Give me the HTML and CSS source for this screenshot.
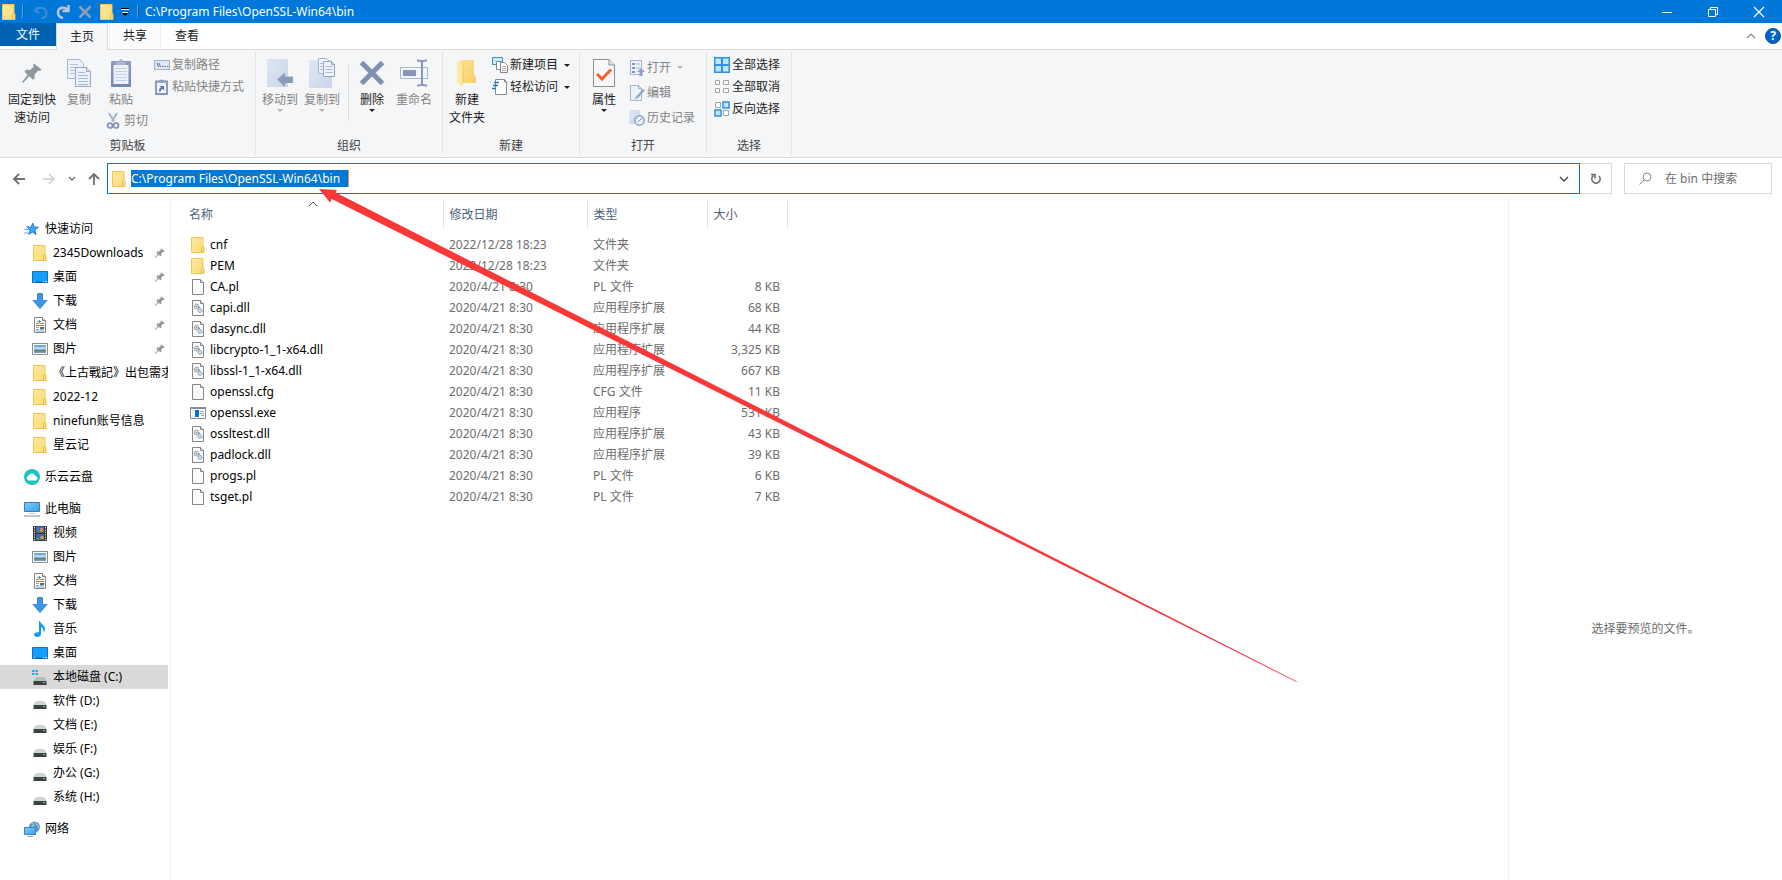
FILE: index.html
```html
<!DOCTYPE html>
<html lang="zh-CN">
<head>
<meta charset="utf-8">
<title>C:\Program Files\OpenSSL-Win64\bin</title>
<link rel="stylesheet" href="styles.css">
</head>
<body>
<svg class="sprite" width="0" height="0" aria-hidden="true">
  <defs>
    <linearGradient id="g-folder" x1="0" y1="0" x2="1" y2="1"><stop offset="0" stop-color="#ffeaa0"/><stop offset="1" stop-color="#fbd978"/></linearGradient>
    <linearGradient id="g-blue" x1="0" y1="0" x2="1" y2="1"><stop offset="0" stop-color="#7fcbff"/><stop offset="1" stop-color="#35a2f0"/></linearGradient>
    <linearGradient id="g-sky" x1="0" y1="0" x2="0" y2="1"><stop offset="0" stop-color="#4f93e0"/><stop offset=".5" stop-color="#d5e9f5"/><stop offset=".62" stop-color="#4b7a78"/><stop offset="1" stop-color="#7aa9b8"/></linearGradient>
    <linearGradient id="g-pale" x1="0" y1="0" x2="1" y2="1"><stop offset="0" stop-color="#dfe7f4"/><stop offset="1" stop-color="#c9d5e9"/></linearGradient>
    <linearGradient id="g-clip" x1="0" y1="0" x2="0" y2="1"><stop offset="0" stop-color="#8b9dc0"/><stop offset="1" stop-color="#7387b0"/></linearGradient>
    <linearGradient id="g-new" x1="0" y1="0" x2="1" y2="1"><stop offset="0" stop-color="#fbe29a"/><stop offset="1" stop-color="#f8cf63"/></linearGradient>
  </defs>
  <symbol id="folder" viewBox="0 0 16 16"><path d="M1.500 .5h11.500v15H1.500z" fill="url(#g-folder)" stroke="#efc94f"/><path d="M11.500 15.500v-5l1-1h1l.5 1v5z" fill="#fbe08a" stroke="#e6bd3f"/></symbol>
  <symbol id="file" viewBox="0 0 16 16"><path d="M2.500.5h8l3 3v12h-11z" fill="#fbfbfb" stroke="#858585"/><path d="M10.500.5v3h3" fill="#e3e3e3" stroke="#858585"/></symbol>
  <symbol id="dll" viewBox="0 0 16 16"><path d="M2.500.5h8l3 3v12h-11z" fill="#fbfbfb" stroke="#858585"/><path d="M10.500.5v3h3" fill="#e3e3e3" stroke="#858585"/><circle cx="6.500" cy="6.500" r="2.200" fill="#e6ebee" stroke="#93a0a8" stroke-width="1.400" stroke-dasharray="1.400 .6"/><circle cx="6.500" cy="6.500" r=".8" fill="#7d8a92"/><circle cx="10" cy="10.500" r="1.900" fill="#cfe0ee" stroke="#8fa6ba" stroke-width="1.300" stroke-dasharray="1.400 .6"/><path d="M8 6l2 2" stroke="#7d8a92"/></symbol>
  <symbol id="exe" viewBox="0 0 16 16"><path d="M.5 2.500h15v11H.5z" fill="#fff" stroke="#858d92"/><path d="M0 2h16v2H0z" fill="#858d92"/><path d="M2.500 5.500h4M2 7h1M2 9h1M2 11h1" stroke="#d0dbe4"/><path d="M5 5h4v7H5z" fill="#0071d8"/><path d="M10 6.500h4M10 8.500h4M11 10.500h3" stroke="#9aa3aa"/></symbol>
  <symbol id="star" viewBox="0 0 16 16"><path d="M8.700 2l1.200 4 4.500.2-3.600 2.800 1.300 4.500-3.800-2.500L4.500 13.500l1.500-4.200-2.500-3 3.700-.2z" fill="#38a6f3" stroke="#1c82cf"/><path d="M2 5.500h3M.5 8.500h4M0 12h4" stroke="#5ab4f2"/></symbol>
  <symbol id="desktop" viewBox="0 0 16 16"><path d="M.5 2.500h15v11H.5z" fill="#149eff" stroke="#0b72c0"/><path d="M1 12.500h14" stroke="#0b80d8"/><path d="M2 12.500h1M11 12.500h1M13 12.500h2" stroke="#dff1ff"/></symbol>
  <symbol id="download" viewBox="0 0 16 16"><path d="M5.500.5h5v7h4.500l-7 8-7-8h4.500z" fill="#3b97e3" stroke="#2777bd" stroke-width=".8"/></symbol>
  <symbol id="doc" viewBox="0 0 16 16"><path d="M2.500.5h8l3 3v12h-11z" fill="#fbfbfb" stroke="#858585"/><path d="M10.500.5v3h3" fill="#e3e3e3" stroke="#858585"/><path d="M4 6.500h3M8 6.500h4M4 8.500h8" stroke="#2d9fe0"/><path d="M5 4.500h4M7.500 3v3" stroke="#2d9fe0"/><path d="M4 10.500h3M4 12.500h3M4 14h8" stroke="#8daabd"/><path d="M8 10h4v2.500H8z" fill="#36799d"/></symbol>
  <symbol id="picture" viewBox="0 0 16 16"><path d="M.5 2.500h15v11H.5z" fill="#fff" stroke="#8d8d8d"/><path d="M2 4h12v8H2z" fill="url(#g-sky)"/></symbol>
  <symbol id="cloud" viewBox="0 0 16 16"><circle cx="8" cy="8" r="8" fill="#1cc5bd"/><path d="M4.500 11.500a2.500 2.500 0 0 1 .2-4.800 3.600 3.600 0 0 1 6.800.3 2.300 2.300 0 0 1 .2 4.500z" fill="#fff"/><path d="M6 9l2.500-2" stroke="#9be3df"/></symbol>
  <symbol id="pc" viewBox="0 0 16 16"><path d="M.5 1.500h15v9H.5z" fill="url(#g-blue)" stroke="#3c7fa8"/><path d="M5 12.500h6" stroke="#b9c4cc"/><path d="M0 15h16" stroke="#8296a5"/></symbol>
  <symbol id="video" viewBox="0 0 16 16"><path d="M1 1h14v15H1z" fill="#3a3a3a"/><path d="M4 1.500h8v6H4z" fill="#3f6fc6"/><path d="M4 9h8v6H4z" fill="#3c68b8"/><path d="M8 3h3v4H8z" fill="#d98b32"/><path d="M8.500 11h3v3h-3z" fill="#d6a632"/><path d="M5 6h3v1.500H5zM5 13h2v2H5z" fill="#4c9b55"/><path d="M2.500 2v14M13.500 2v14" stroke="#e6e6e6" stroke-dasharray="1.200 1.200"/></symbol>
  <symbol id="music" viewBox="0 0 16 16"><path d="M8 0c.5 3 5 4 5 8 0 1.500-.5 2.500-1.500 3.500.5-3-.5-4.500-2.500-5.500v7c0 1.600-1.600 3-3.500 3S2 15 2 13.500 4 11 6.500 11.200L7 11V0z" fill="#0f9cf5"/></symbol>
  <symbol id="disk" viewBox="0 0 16 16"><path d="M3.500 8h9l2 4h-13z" fill="#d0d2d5"/><path d="M1.500 12h13v4h-13z" fill="#3f4245"/><path d="M11 13.500h2" stroke="#58e06a"/></symbol>
  <symbol id="osdisk" viewBox="0 0 16 16"><path d="M0 1h2.500v2H0zM3.500 1H6v2H3.500zM0 4h2.500v2H0zM3.500 4H6v2H3.500z" fill="#15b3f2"/><path d="M4 8h8.500l2 4h-13z" fill="#b9bcbf"/><path d="M1.500 12h13v4h-13z" fill="#3f4245"/><path d="M11 13.500h2" stroke="#58e06a"/></symbol>
  <symbol id="network" viewBox="0 0 16 16"><circle cx="10.500" cy="6" r="5.500" fill="#5e97bd"/><path d="M7 2c2 0 3 1.500 2 3s-2 1-3 2M12 1.500c-1 2 1 2 2 3s0 3 1 3" stroke="#c4dfee" fill="none"/><path d="M.5 6.500h11v7H.5z" fill="url(#g-blue)" stroke="#3c86b5"/><path d="M3 15.500h6" stroke="#94adbd"/></symbol>
  <symbol id="pin" viewBox="0 0 20 20"><path d="M12 .5l7.500 6-1.500 1.500-2-.3-3.500 4 .3 3.500-1.800 1.600-3.700-3.500L1 20l-1-1 5.500-7L2.500 8.500l1.600-1.700 4 .2 3.700-3.500-.8-1.800z" fill="#8e999f"/></symbol>
  <symbol id="copy" viewBox="0 0 24 28"><path d="M.5.5h12l4 4v15H.5z" fill="#edf2f9" stroke="#a5b5d2"/><path d="M3 5.500h8M3 8.500h11M3 11.500h11M3 14.500h11" stroke="#b7c5de"/><path d="M8.500 8.500h11l4 4v15h-15z" fill="#edf2f9" stroke="#95a8ca"/><path d="M19.500 8.500v4h4" fill="#d5deed" stroke="#95a8ca"/><path d="M11 13.500h7M11 16.500h10M11 19.500h10M11 22.500h10M11 25.500h10" stroke="#a9b9d6"/></symbol>
  <symbol id="paste" viewBox="0 0 20 28"><rect y="2" width="20" height="26" rx="1" fill="url(#g-clip)"/><path d="M2.500 6h15v19h-15z" fill="#edf2fa"/><path d="M4 9.500h12M4 12.500h12M4 15.500h12M4 18.500h12M4 21.500h12" stroke="#c5d1e6"/><path d="M5 6V3h3c0-4 4-4 4 0h3v3z" fill="#a9b7d2"/></symbol>
  <symbol id="copypath" viewBox="0 0 16 16"><path d="M.5 3.500h15v9H.5z" fill="#dfe7f3" stroke="#a2b1cd"/><path d="M3 6l1.500 4M5 6l1.500 4" stroke="#5d7097" fill="none"/><path d="M8 9.500h1.500M10.500 9.500H12M13 9.500h1.500" stroke="#5d7097"/></symbol>
  <symbol id="pastelink" viewBox="0 0 16 16"><path d="M2 2.500h11v12.500H2z" fill="#eef3fa" stroke="#8193b8" stroke-width="1.800"/><path d="M4.500 3.500c0-4 6-4 6 0z" fill="#8b9cbe"/><path d="M5 12.500c0-2.500.5-3.500 2-4L5.500 7h4.500v4.500L8.500 10c-1 .3-1.500 1-1.700 2.500z" fill="#5e759f"/></symbol>
  <symbol id="cut" viewBox="0 0 16 16"><path d="M3 0l5 8.500M11 0L6 8.500" stroke="#a3b1ca" stroke-width="2"/><circle cx="4" cy="12.500" r="2.500" fill="none" stroke="#7c8fb4" stroke-width="1.700"/><circle cx="10" cy="12.500" r="2.500" fill="none" stroke="#7c8fb4" stroke-width="1.700"/></symbol>
  <symbol id="moveto" viewBox="0 0 28 28"><path d="M1 0h21v28H1z" fill="url(#g-pale)"/><path d="M11 20.500l8-7v4h8v6.500h-8v4z" fill="#8b9bba"/></symbol>
  <symbol id="copyto" viewBox="0 0 28 30"><path d="M1 2h23v28H1z" fill="url(#g-pale)"/><path d="M10.500.5h8l3 3v12h-11z" fill="#eff3fa" stroke="#a5b5d2"/><path d="M15.500 3.500h8l3 3v12h-11z" fill="#eff3fa" stroke="#95a8ca"/><path d="M23.500 3.500v3h3" fill="none" stroke="#95a8ca"/><path d="M17.500 8.500h7M17.500 11.500h7M17.500 14.500h7M12 5.500h3M12 8.500h3M12 11.500h3" stroke="#a9b9d6"/></symbol>
  <symbol id="delete" viewBox="0 0 26 26"><path d="M2.500 2.500l21 21M23.500 2.500l-21 21" stroke="#8091b3" stroke-width="5"/></symbol>
  <symbol id="rename" viewBox="0 0 28 28"><path d="M.5 8.500h27v11H.5z" fill="#f4f7fb" stroke="#a8b6d0"/><path d="M3 11h13v6H3z" fill="#8598bb"/><path d="M22 1v26M17 1.500c3 0 5 .5 5 2 0-1.500 2-2 5-2M17 26.500c3 0 5-.5 5-2 0 1.500 2 2 5 2" stroke="#8497ba" stroke-width="2" fill="none"/></symbol>
  <symbol id="newfolder" viewBox="0 0 20 28"><path d="M3 1h14v14l2 3v6H3z" fill="url(#g-new)"/><path d="M0 2.500L6 6v22L0 24z" fill="#fde7a6"/><path d="M6 6v18" stroke="#eec35a"/></symbol>
  <symbol id="newitem" viewBox="0 0 16 16"><path d="M.5.5h10v7H.5z" fill="#c8ecf5" stroke="#4891a8"/><path d="M4.500 4.500h5l2 2v6h-7z" fill="#fff" stroke="#7c8c92"/><path d="M8.500 5.500h4l3 3v7h-7z" fill="#fff" stroke="#7c8c92"/><path d="M10 9.500h4M10 11.500h4M10 13.500h4" stroke="#dc9a9d"/></symbol>
  <symbol id="easy" viewBox="0 0 16 16"><path d="M3.500.5h9l2 2v13h-11z" fill="#fff" stroke="#8b8b8b"/><path d="M12.500.5v2.500h2" fill="none" stroke="#8b8b8b"/><path d="M0 1h3v10H0z" fill="#f5f6f7"/><path d="M2 3.500h5M1 6.500h5M0 9.500h4" stroke="#1e7ac2" stroke-width="1.500"/></symbol>
  <symbol id="props" viewBox="0 0 22 28"><path d="M.5.500h15.500l5.500 5.500v21.500H.5z" fill="#f8f8f8" stroke="#8f8f8f"/><path d="M16 .5V6h5.500" fill="#e3e3e3" stroke="#8f8f8f"/><path d="M4 15l5 5 9-9.500" fill="none" stroke="#f4622a" stroke-width="3"/></symbol>
  <symbol id="open" viewBox="0 0 16 16"><path d="M1.500.5h11v14h-11z" fill="#eef3fa" stroke="#a5b4cf"/><path d="M3 3h3v2H3zM3 7h3v2H3zM3 11h3v2H3z" fill="#7f93bb"/><path d="M7 4h4M7 8h4" stroke="#a3b4d2"/><path d="M12 8l4 4h-2.500v4h-3v-4H8z" fill="#8da0c4"/></symbol>
  <symbol id="edit" viewBox="0 0 16 16"><path d="M1.500.5h8l3 3v12h-11z" fill="#eef3fa" stroke="#a5b4cf"/><path d="M9.500.5v3h3" fill="none" stroke="#a5b4cf"/><path d="M15 4.500L7.500 13" stroke="#93a7cb" stroke-width="2.500"/><path d="M5 15l1-3.500 2.500 2z" fill="#b9c6de"/></symbol>
  <symbol id="history" viewBox="0 0 16 16"><path d="M0 0h11v14H0z" fill="url(#g-pale)"/><circle cx="10.500" cy="10.500" r="4.700" fill="#eef3fa" stroke="#8ea0c0" stroke-width="1.500"/><path d="M10.500 10.500l3-3M10.500 10.500l-2 1.500M7.500 8l1 .5" stroke="#7388b2"/></symbol>
  <symbol id="selall" viewBox="0 0 16 16"><path d="M0 0h16v16H0z" fill="#2f93e4"/><path d="M1.500 1.500h5.500v5.500H1.500zM9 1.500h5.500v5.500H9zM1.500 9h5.500v5.500H1.500zM9 9h5.500v5.500H9z" fill="#bfe5fb"/></symbol>
  <symbol id="selnone" viewBox="0 0 16 16"><path d="M1.500 1.500h4v4h-4zM9.500 1.500h5v4h-5zM1.500 9.500h4v4h-4zM9.500 9.500h5v4h-5z" fill="#fff" stroke="#a3a3a3"/></symbol>
  <symbol id="selinv" viewBox="0 0 16 16"><path d="M1.500 1.500h5v5h-5zM9.500 9.500h5v5h-5z" fill="#fff" stroke="#a3a3a3"/><path d="M9 1h6v6H9zM1 9h6v6H1z" fill="#bfe5fb" stroke="#2f93e4" stroke-width="1.500"/></symbol>
</svg>

<header class="titlebar">
  <div class="quick">
    <svg class="i16"><use href="#folder"/></svg>
    <span class="bar"></span>
    <button class="qbtn" aria-label="撤消"><svg class="i16" viewBox="0 0 16 16"><path d="M5 3L2 6.500 6 9M2.500 6c6-4 11-2 11 3s-4 5-5 5" stroke="#3d8fd8" stroke-width="2" fill="none"/></svg></button>
    <button class="qbtn" aria-label="恢复"><svg class="i16" viewBox="0 0 16 16"><path d="M13.500 1v6h-6M13 6.500C10 2 3 3 3 8.500c0 3 2 5 5 5.500" stroke="#b4c6df" stroke-width="2.500" fill="none"/></svg></button>
    <button class="qbtn" aria-label="删除"><svg class="i16" viewBox="0 0 16 16"><path d="M2.500 2.500l11 11M13.500 2.500l-11 11" stroke="#8d9db9" stroke-width="2.500"/></svg></button>
    <button class="qbtn" aria-label="新建文件夹"><svg class="i16"><use href="#folder"/></svg></button>
    <button class="qmore" aria-label="自定义快速访问工具栏"><svg width="8" height="8" viewBox="0 0 8 8"><path d="M0 .5h8" stroke="#000"/><path d="M0 1.500h8" stroke="#fff"/><path d="M0 4h8L4 8z" fill="#000"/><path d="M1 4.500h6" stroke="#fff"/></svg></button>
    <span class="bar"></span>
  </div>
  <h1 class="title">C:\Program Files\OpenSSL-Win64\bin</h1>
  <button class="wbtn" aria-label="最小化"><svg width="12" height="12"><path d="M1 6.500h10" stroke="#fff"/></svg></button>
  <button class="wbtn" aria-label="还原"><svg width="12" height="12"><path d="M1.500 3.500h7v7h-7zM3.500 3.500v-2h7v7h-2" fill="none" stroke="#fff"/></svg></button>
  <button class="wbtn" aria-label="关闭"><svg width="12" height="12"><path d="M1 1l10 10M11 1L1 11" stroke="#fff" stroke-width="1.200"/></svg></button>
</header>

<nav class="tabs">
  <button class="tab tab-file">文件</button>
  <button class="tab tab-on">主页</button>
  <button class="tab tab-hover">共享</button>
  <button class="tab">查看</button>
  <span class="grow"></span>
  <button class="plain" aria-label="最小化功能区"><svg width="10" height="6"><path d="M1 5l4-4 4 4" fill="none" stroke="#8a8a8a" stroke-width="1.200"/></svg></button>
  <button class="plain help" aria-label="帮助">?</button>
</nav>

<section class="ribbon">
  <div class="group g-clip">
    <div class="gbody">
      <button class="big w56"><span class="pic"><svg width="20" height="20"><use href="#pin"/></svg></span>固定到快<br>速访问</button>
      <button class="big w38 off"><span class="pic"><svg width="24" height="28"><use href="#copy"/></svg></span>复制</button>
      <div class="pastecol">
        <button class="big w46 off"><span class="pic"><svg width="20" height="28"><use href="#paste"/></svg></span>粘贴</button>
        <button class="small cut off"><svg class="i16"><use href="#cut"/></svg>剪切</button>
      </div>
      <div class="stack">
        <button class="small off"><svg class="i16"><use href="#copypath"/></svg>复制路径</button>
        <button class="small off"><svg class="i16"><use href="#pastelink"/></svg>粘贴快捷方式</button>
      </div>
    </div>
    <div class="caption">剪贴板</div>
  </div>
  <div class="group g-org">
    <div class="gbody pad3">
      <button class="big w42 off"><span class="pic"><svg width="28" height="28"><use href="#moveto"/></svg></span>移动到<i class="caret"></i></button>
      <button class="big w42 off"><span class="pic"><svg width="28" height="30"><use href="#copyto"/></svg></span>复制到<i class="caret"></i></button>
      <span class="vsep"></span>
      <button class="big w42"><span class="pic"><svg width="26" height="26"><use href="#delete"/></svg></span>删除<i class="caret"></i></button>
      <button class="big w42 off"><span class="pic"><svg width="28" height="28"><use href="#rename"/></svg></span>重命名</button>
    </div>
    <div class="caption">组织</div>
  </div>
  <div class="group g-new">
    <div class="gbody pad3">
      <button class="big w42"><span class="pic"><svg width="20" height="28"><use href="#newfolder"/></svg></span>新建<br>文件夹</button>
      <div class="stack inset">
        <button class="small"><svg class="i16"><use href="#newitem"/></svg>新建项目<i class="caret side"></i></button>
        <button class="small"><svg class="i16"><use href="#easy"/></svg>轻松访问<i class="caret side"></i></button>
      </div>
    </div>
    <div class="caption">新建</div>
  </div>
  <div class="group g-open">
    <div class="gbody pad3">
      <button class="big w42"><span class="pic"><svg width="22" height="28"><use href="#props"/></svg></span>属性<i class="caret"></i></button>
      <div class="stack tall inset">
        <button class="small off"><svg class="i16"><use href="#open"/></svg>打开<i class="caret side"></i></button>
        <button class="small off"><svg class="i16"><use href="#edit"/></svg>编辑</button>
        <button class="small off"><svg class="i16"><use href="#history"/></svg>历史记录</button>
      </div>
    </div>
    <div class="caption">打开</div>
  </div>
  <div class="group g-sel">
    <div class="gbody pad3">
      <div class="stack inset">
        <button class="small"><svg class="i16"><use href="#selall"/></svg>全部选择</button>
        <button class="small"><svg class="i16"><use href="#selnone"/></svg>全部取消</button>
        <button class="small"><svg class="i16"><use href="#selinv"/></svg>反向选择</button>
      </div>
    </div>
    <div class="caption">选择</div>
  </div>
</section>

<div class="navbar">
  <button class="nbtn" aria-label="后退"><svg width="14" height="12"><path d="M13 6H2M7 1L2 6l5 5" fill="none" stroke="#707070" stroke-width="1.800"/></svg></button>
  <button class="nbtn" aria-label="前进"><svg width="14" height="12"><path d="M1 6h11M7 1l5 5-5 5" fill="none" stroke="#d8d8d8" stroke-width="1.800"/></svg></button>
  <button class="nbtn narrow" aria-label="最近浏览的位置"><svg width="8" height="6"><path d="M1 1l3 3 3-3" fill="none" stroke="#808080" stroke-width="1.600"/></svg></button>
  <button class="nbtn narrow up" aria-label="上移"><svg width="12" height="14"><path d="M6 13V2M1 7l5-5 5 5" fill="none" stroke="#707070" stroke-width="1.800"/></svg></button>
  <div class="address">
    <svg class="i16"><use href="#folder"/></svg>
    <input class="path" type="text" aria-label="地址" value="C:\Program Files\OpenSSL-Win64\bin">
    <span class="grow"></span>
    <button class="plain drop" aria-label="历史位置"><svg width="10" height="8"><path d="M1 2l4 4 4-4" fill="none" stroke="#444" stroke-width="1.300"/></svg></button>
  </div>
  <button class="refresh" aria-label="刷新"><svg width="12" height="12"><path d="M3.500 2.500A4.200 4.200 0 1 0 9 3M1 1.500h4v4" fill="none" stroke="#707070" stroke-width="1.600"/></svg></button>
  <label class="search"><svg width="13" height="13"><circle cx="8" cy="5" r="4" fill="none" stroke="#888"/><path d="M5 8l-4.500 4.500" stroke="#888"/></svg><input type="search" aria-label="搜索" placeholder="在 bin 中搜索"></label>
</div>

<main class="content">
  <aside class="tree">
    <ul>
      <li class="top"><svg class="i16"><use href="#star"/></svg>快速访问</li>
      <li><svg class="i16"><use href="#folder"/></svg><span class="name">2345Downloads</span><svg class="pinned"><use href="#pin"/></svg></li>
      <li><svg class="i16"><use href="#desktop"/></svg><span class="name">桌面</span><svg class="pinned"><use href="#pin"/></svg></li>
      <li><svg class="i16"><use href="#download"/></svg><span class="name">下载</span><svg class="pinned"><use href="#pin"/></svg></li>
      <li><svg class="i16"><use href="#doc"/></svg><span class="name">文档</span><svg class="pinned"><use href="#pin"/></svg></li>
      <li><svg class="i16"><use href="#picture"/></svg><span class="name">图片</span><svg class="pinned"><use href="#pin"/></svg></li>
      <li><svg class="i16"><use href="#folder"/></svg><span class="name">《上古戰記》出包需求</span></li>
      <li><svg class="i16"><use href="#folder"/></svg><span class="name">2022-12</span></li>
      <li><svg class="i16"><use href="#folder"/></svg><span class="name">ninefun账号信息</span></li>
      <li><svg class="i16"><use href="#folder"/></svg><span class="name">星云记</span></li>
    </ul>
    <ul>
      <li class="top"><svg class="i16"><use href="#cloud"/></svg>乐云云盘</li>
    </ul>
    <ul>
      <li class="top"><svg class="i16"><use href="#pc"/></svg>此电脑</li>
      <li><svg class="i16"><use href="#video"/></svg>视频</li>
      <li><svg class="i16"><use href="#picture"/></svg>图片</li>
      <li><svg class="i16"><use href="#doc"/></svg>文档</li>
      <li><svg class="i16"><use href="#download"/></svg>下载</li>
      <li><svg class="i16"><use href="#music"/></svg>音乐</li>
      <li><svg class="i16"><use href="#desktop"/></svg>桌面</li>
      <li class="current"><svg class="i16"><use href="#osdisk"/></svg>本地磁盘 (C:)</li>
      <li><svg class="i16"><use href="#disk"/></svg>软件 (D:)</li>
      <li><svg class="i16"><use href="#disk"/></svg>文档 (E:)</li>
      <li><svg class="i16"><use href="#disk"/></svg>娱乐 (F:)</li>
      <li><svg class="i16"><use href="#disk"/></svg>办公 (G:)</li>
      <li><svg class="i16"><use href="#disk"/></svg>系统 (H:)</li>
    </ul>
    <ul>
      <li class="top"><svg class="i16"><use href="#network"/></svg>网络</li>
    </ul>
  </aside>

  <section class="files">
    <table>
      <colgroup><col class="c-name"><col class="c-date"><col class="c-type"><col class="c-size"></colgroup>
      <thead>
        <tr><th>名称<svg class="sort" width="10" height="6"><path d="M1 5l4-4 4 4" fill="none" stroke="#555"/></svg></th><th>修改日期</th><th>类型</th><th>大小</th></tr>
      </thead>
      <tbody>
        <tr><td><svg class="i16"><use href="#folder"/></svg>cnf</td><td>2022/12/28 18:23</td><td>文件夹</td><td></td></tr>
        <tr><td><svg class="i16"><use href="#folder"/></svg>PEM</td><td>2022/12/28 18:23</td><td>文件夹</td><td></td></tr>
        <tr><td><svg class="i16"><use href="#file"/></svg>CA.pl</td><td>2020/4/21 8:30</td><td>PL 文件</td><td>8 KB</td></tr>
        <tr><td><svg class="i16"><use href="#dll"/></svg>capi.dll</td><td>2020/4/21 8:30</td><td>应用程序扩展</td><td>68 KB</td></tr>
        <tr><td><svg class="i16"><use href="#dll"/></svg>dasync.dll</td><td>2020/4/21 8:30</td><td>应用程序扩展</td><td>44 KB</td></tr>
        <tr><td><svg class="i16"><use href="#dll"/></svg>libcrypto-1_1-x64.dll</td><td>2020/4/21 8:30</td><td>应用程序扩展</td><td>3,325 KB</td></tr>
        <tr><td><svg class="i16"><use href="#dll"/></svg>libssl-1_1-x64.dll</td><td>2020/4/21 8:30</td><td>应用程序扩展</td><td>667 KB</td></tr>
        <tr><td><svg class="i16"><use href="#file"/></svg>openssl.cfg</td><td>2020/4/21 8:30</td><td>CFG 文件</td><td>11 KB</td></tr>
        <tr><td><svg class="i16"><use href="#exe"/></svg>openssl.exe</td><td>2020/4/21 8:30</td><td>应用程序</td><td>531 KB</td></tr>
        <tr><td><svg class="i16"><use href="#dll"/></svg>ossltest.dll</td><td>2020/4/21 8:30</td><td>应用程序扩展</td><td>43 KB</td></tr>
        <tr><td><svg class="i16"><use href="#dll"/></svg>padlock.dll</td><td>2020/4/21 8:30</td><td>应用程序扩展</td><td>39 KB</td></tr>
        <tr><td><svg class="i16"><use href="#file"/></svg>progs.pl</td><td>2020/4/21 8:30</td><td>PL 文件</td><td>6 KB</td></tr>
        <tr><td><svg class="i16"><use href="#file"/></svg>tsget.pl</td><td>2020/4/21 8:30</td><td>PL 文件</td><td>7 KB</td></tr>
      </tbody>
    </table>
  </section>

  <aside class="preview">选择要预览的文件。</aside>
</main>

<svg class="arrow" width="980" height="496" viewBox="318 188 980 496" aria-hidden="true"><path d="M319 189L337 190 335.700 192.500 1297 681.500 1296.500 682 331.700 199 330 202.600z" fill="#fb3838"/></svg>
</body>
</html>
```

FILE: styles.css
```css
* {
  box-sizing: border-box;
}

body {
  margin: 0;
  min-height: 100vh;
  display: flex;
  flex-direction: column;
  position: relative;
  overflow: hidden;
  background: #fff;
  color: #000;
  font: 12px/18px "Noto Sans", "Noto Sans CJK SC", sans-serif;
}

button,
input {
  margin: 0;
  padding: 0;
  border: 0;
  background: none;
  font: inherit;
  color: inherit;
  outline: none;
}

svg {
  flex: none;
  display: block;
}

.sprite {
  position: absolute;
}

.i16 {
  width: 16px;
  height: 16px;
}

.grow {
  flex: 1;
}

.plain {
  display: flex;
  align-items: center;
  justify-content: center;
}

/* title bar */

.titlebar {
  display: flex;
  align-items: center;
  height: 23px;
  background: #0078d9;
  color: #fff;
}

.quick {
  display: flex;
  align-items: center;
  padding-left: 1px;
}

.bar {
  width: 2px;
  height: 13px;
  margin: 0 6px 0 5px;
  border-left: 1px solid #5c9fd6;
  border-right: 1px solid #0b5fa8;
}

.qbtn {
  width: 22px;
  display: flex;
  justify-content: center;
}

.qmore {
  width: 14px;
  display: flex;
  justify-content: center;
}

.title {
  flex: 1;
  margin: 0;
  font-size: 12px;
  font-weight: 400;
}

.wbtn {
  width: 46px;
  height: 20px;
  display: flex;
  align-items: center;
  justify-content: center;
}

/* ribbon tabs */

.tabs {
  display: flex;
  align-items: flex-start;
  height: 27px;
  border-bottom: 1px solid #dadbdc;
  padding-right: 1px;
}

.tab {
  width: 52px;
  height: 26px;
  color: #222;
  line-height: 24px;
  border: 1px solid transparent;
  border-width: 0 1px;
}

.tab-file {
  width: 56px;
  height: 23px;
  background: #0063b1;
  color: #fff;
}

.tab-on {
  height: 27px;
  background: #f5f6f7;
  border: 1px solid #dadbdc;
  border-bottom: 0;
  line-height: 22px;
}

.tab-hover {
  border-color: #ebecec;
  background: #fcfcfd;
  margin-left: 1px;
}

.tabs .plain {
  height: 16px;
  margin: 5px 0 0 9px;
}

.tabs .help {
  width: 16px;
  border-radius: 8px;
  border: 1px solid #0a4a8c;
  background: #0066cc;
  color: #fff;
  font-weight: 700;
}

/* ribbon */

.ribbon {
  display: flex;
  height: 108px;
  padding: 2px 0 3px;
  background: #f5f6f7;
  border-bottom: 1px solid #dadbdc;
}

.group {
  display: flex;
  flex-direction: column;
  border-right: 1px solid #e2e3e4;
}

.g-clip { width: 256px; }
.g-org { width: 187px; }
.g-new { width: 137px; }
.g-open { width: 127px; }
.g-sel { width: 85px; }

.gbody {
  flex: 1;
  display: flex;
  align-items: flex-start;
  padding: 0 0 0 4px;
}

.gbody.pad3 {
  padding-left: 3px;
}

.caption {
  line-height: 16px;
  text-align: center;
  color: #444;
}

.big {
  display: block;
  padding-top: 6px;
  line-height: 18px;
  color: #222;
  text-align: center;
  white-space: nowrap;
}

.pic {
  display: flex;
  align-items: center;
  justify-content: center;
  height: 30px;
  margin-bottom: 3px;
}

.w38 { width: 38px; }
.w42 { width: 42px; }
.w46 { width: 46px; }
.w56 { width: 56px; }

.caret {
  display: block;
  width: 0;
  margin: 0 auto;
  border: 3px solid transparent;
  border-top-color: currentColor;
  border-bottom: 0;
}

.side {
  margin: 0 0 0 4px;
}

.pastecol {
  width: 56px;
}

.cut {
  margin: 3px 0 0 8px;
}

.stack {
  display: grid;
  grid-auto-rows: 22px;
  padding-top: 2px;
}

.tall {
  grid-auto-rows: 25px;
  padding-top: 3px;
}

.inset {
  padding-left: 4px;
}

.small {
  display: flex;
  align-items: center;
  gap: 2px;
  color: #222;
  white-space: nowrap;
}

.off.big,
.off.small {
  color: #838383;
}

.off .caret {
  border-top-color: #b4b4b4;
}

.vsep {
  width: 1px;
  height: 56px;
  margin: 13px 2px 0 5px;
  background: #dcdddf;
}

/* address row */

.navbar {
  display: flex;
  align-items: center;
  padding: 5px 10px 5px 4px;
}

.nbtn {
  width: 30px;
  display: flex;
  align-items: center;
  justify-content: center;
}

.narrow {
  width: 16px;
}

.up {
  width: 27px;
}

.address {
  flex: 1;
  height: 31px;
  display: flex;
  align-items: center;
  padding: 0 10px 0 3px;
  border: 1px solid #0078d7;
}

.path {
  width: 218px;
  height: 17px;
  margin-left: 4px;
  background: #0078d7;
  color: #fff;
  border-right: 1px solid #ff8c28;
}

.refresh {
  width: 32px;
  height: 31px;
  display: flex;
  align-items: center;
  justify-content: center;
  border: 1px solid #d9d9d9;
  border-left: 0;
}

.search {
  width: 148px;
  height: 31px;
  margin-left: 12px;
  padding-left: 14px;
  display: flex;
  align-items: center;
  gap: 13px;
  border: 1px solid #d9d9d9;
}

.search input {
  width: 100px;
}

.search input::placeholder {
  color: #6d6d6d;
}

/* body */

.content {
  flex: 1;
  display: flex;
}

.tree {
  width: 171px;
  padding: 18px 2px 0 0;
  border-right: 1px solid #f0f0f0;
}

.tree ul {
  margin: 0 0 8px;
  padding: 0;
  list-style: none;
}

.tree li {
  height: 24px;
  display: flex;
  align-items: center;
  gap: 5px;
  padding-left: 32px;
  white-space: nowrap;
  overflow: hidden;
}

.tree .top {
  padding-left: 24px;
}

.tree .current {
  background: #d9d9d9;
}

.name {
  flex: 1;
  min-width: 0;
}

.pinned {
  width: 10px;
  height: 10px;
  margin-right: 3px;
}

.files {
  flex: 1;
  padding: 2px 0 0 11px;
}

.files table {
  width: 605px;
  table-layout: fixed;
  border-collapse: collapse;
}

.c-name { width: 261px; }
.c-date { width: 144px; }
.c-type { width: 120px; }
.c-size { width: 80px; }

.files th {
  position: relative;
  height: 27px;
  padding: 0 0 0 6px;
  border-right: 1px solid #e2e2e2;
  color: #4c607a;
  font-weight: 400;
  text-align: left;
}

.files th:first-child {
  padding-left: 7px;
}

.sort {
  position: absolute;
  left: 126px;
  top: 0;
}

.files td {
  height: 21px;
  padding: 0 0 0 6px;
  line-height: 18px;
  color: #6d6d6d;
  white-space: nowrap;
}

.files tbody::before {
  content: "";
  display: block;
  height: 6px;
}

.files td:first-child {
  display: flex;
  align-items: center;
  gap: 4px;
  padding-left: 8px;
  color: #000;
}

.files td:last-child {
  text-align: right;
  padding-right: 7px;
}

.preview {
  width: 274px;
  display: flex;
  justify-content: center;
  padding-top: 421px;
  border-left: 1px solid #f0f0f0;
  color: #6d6d6d;
}

/* pointer drawn over the window */

.arrow {
  position: absolute;
  left: 318px;
  top: 188px;
  pointer-events: none;
}
```
